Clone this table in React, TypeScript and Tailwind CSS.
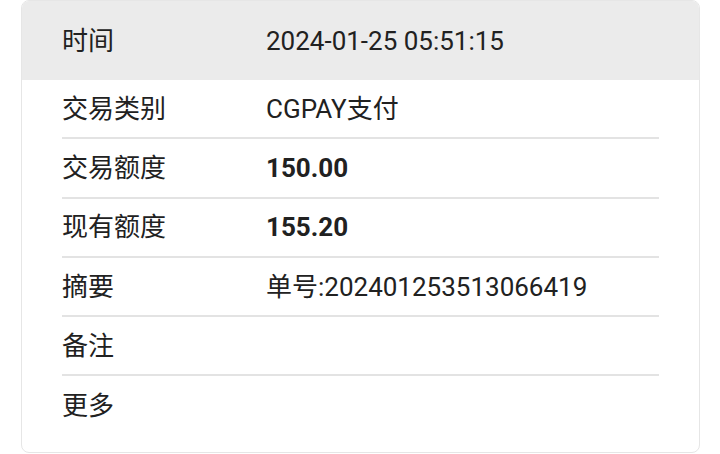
import React from "react";

const rows: { label: string; value: string; bold?: boolean }[] = [
  { label: "交易类别", value: "CGPAY支付" },
  { label: "交易额度", value: "150.00", bold: true },
  { label: "现有额度", value: "155.20", bold: true },
  { label: "摘要", value: "单号:202401253513066419" },
  { label: "备注", value: "" },
  { label: "更多", value: "" },
];

export default function App() {
  return (
    <div
      className="w-[720px] h-[454px] bg-white overflow-hidden text-[#212121]"
      style={{ fontFamily: "Roboto, 'Noto Sans CJK SC', sans-serif" }}
    >
      <div className="ml-[21px] w-[679px] border border-[#e6e6e6] rounded-lg overflow-hidden pb-[16px]">
        <div className="h-[79px] bg-[#ebebeb] flex items-center px-[40px] text-[26px] leading-none">
          <div className="w-[204px] shrink-0">时间</div>
          <div>2024-01-25 05:51:15</div>
        </div>
        <div className="px-[40px]">
          {rows.map((r, i) => (
            <div
              key={r.label}
              className={
                "h-[59.3px] flex items-center text-[26px] leading-none " +
                (i < rows.length - 1 ? "border-b-2 border-[#e3e3e3]" : "")
              }
            >
              <div className="w-[204px] shrink-0">{r.label}</div>
              <div className={r.bold ? "font-bold" : ""}>{r.value}</div>
            </div>
          ))}
        </div>
      </div>
    </div>
  );
}
